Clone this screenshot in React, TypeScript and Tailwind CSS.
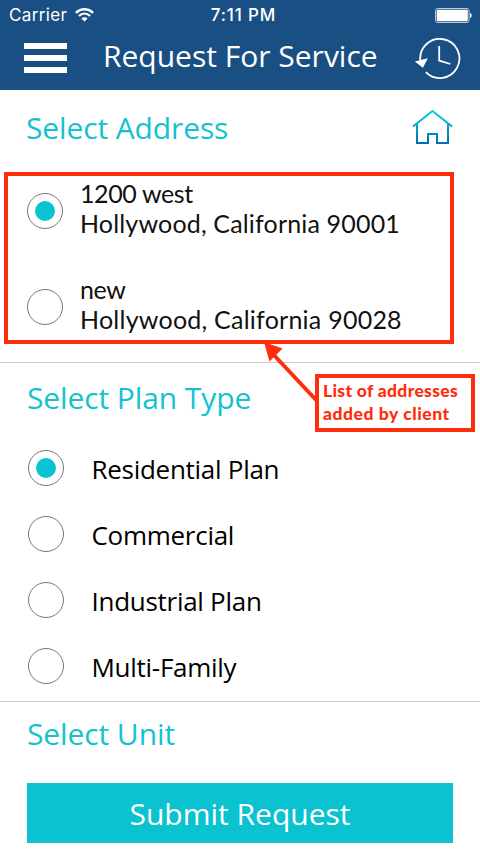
import React from "react";

const SANS = "font-['Open_Sans','Noto_Sans',sans-serif]";
const HUMANIST = "font-[Lato,'Noto_Sans',sans-serif]";

function Radio({ checked }: { checked?: boolean }) {
  return (
    <span className="flex size-9 shrink-0 items-center justify-center rounded-full border border-[#777] bg-white">
      {checked && <span className="size-5 rounded-full bg-[#0bc2d2]" />}
    </span>
  );
}

function Wifi() {
  return (
    <svg className="ml-2 h-[14px] w-[19px]" viewBox="0 0 19 14" fill="none" stroke="white" strokeWidth="2.3">
      <path d="M0.9 4.9 C5.8 0 13.2 0 18.1 4.9" />
      <path d="M3.9 8 C7.2 4.9 11.8 4.9 15.1 8" />
      <path d="M9.5 13.6 L6.4 10.4 C8.2 8.9 10.8 8.9 12.6 10.4 Z" fill="white" stroke="none" />
    </svg>
  );
}

function Battery() {
  return (
    <svg className="h-[15px] w-[37px]" viewBox="0 0 37 15">
      <rect x="0.5" y="0.5" width="33.5" height="14" rx="2" fill="none" stroke="#b9cbdc" />
      <rect x="1.7" y="1.7" width="31.1" height="11.6" rx="1" fill="white" />
      <path d="M35 5 C37.2 5.6 37.2 9.4 35 10 Z" fill="white" />
    </svg>
  );
}

function History() {
  return (
    <svg className="h-[42px] w-[48px]" viewBox="0 0 48 42" fill="none" stroke="white" strokeWidth="1.8">
      <path d="M6.3 22.5 A19.6 19.6 0 1 1 11.8 34.2" />
      <path d="M25.2 8 V22.5 L36.4 26" />
      <path d="M0.8 23.6 L13.8 20.2 L9 29.8 Z" fill="white" stroke="none" />
    </svg>
  );
}

function Home() {
  return (
    <svg className="h-[36px] w-[41px]" viewBox="0 0 41 36" fill="none" stroke="url(#home)" strokeWidth="2">
      <defs>
        <linearGradient id="home" x1="0" y1="0" x2="0" y2="36" gradientUnits="userSpaceOnUse">
          <stop offset="0" stopColor="#00d9e4" />
          <stop offset="1" stopColor="#0069b4" />
        </linearGradient>
      </defs>
      <path d="M1 17.5 L20.5 2 L40 17.5" />
      <path d="M5 15 V34 H16 V25 H25 V34 H36 V15" />
    </svg>
  );
}

const addresses = [
  { name: "1200 west", line: "Hollywood, California 90001", checked: true, spacing: "tracking-[0.17px]" },
  { name: "new", line: "Hollywood, California 90028", checked: false, spacing: "tracking-[0.24px]" },
];

const plans = ["Residential Plan", "Commercial", "Industrial Plan", "Multi-Family"];

export default function App() {
  return (
    <div className={`relative flex h-[852px] w-[480px] flex-col overflow-hidden bg-white ${SANS}`}>
      <header className="h-[90px] bg-[#1a4f84] text-white">
        <div className="grid h-[30px] grid-cols-3 items-center pr-2 pl-[9px] font-[Inter,sans-serif] text-[17px] leading-[30px]">
          <div className="flex items-center">
            <span className="pt-px leading-[29px] tracking-[0.35px]">Carrier</span>
            <Wifi />
          </div>
          <span className="pt-px pl-[6px] text-center leading-[29px] font-medium tracking-[0.85px] whitespace-nowrap">7:11 PM</span>
          <span className="flex justify-end"><Battery /></span>
        </div>
        <div className="flex h-[60px] items-start pl-6">
          <div className="mt-[13px] flex w-[43px] flex-col gap-1.5">
            <span className="h-1.5 bg-white" />
            <span className="h-1.5 bg-white" />
            <span className="h-1.5 bg-white" />
          </div>
          <h1 className="mt-1.5 ml-9 w-[300px] text-[30px] leading-10 whitespace-nowrap">Request For Service</h1>
          <span className="mt-2 ml-[11px]"><History /></span>
        </div>
      </header>

      <section className="h-[273px] border-b border-[#ccc] pt-[18px]">
        <div className="flex h-10 items-start justify-between pr-[27px] pl-[26px]">
          <h2 className="text-[30px] leading-10 tracking-[-0.12px] text-[#14c2cf]">Select Address</h2>
          <span className="mt-px"><Home /></span>
        </div>
        <div className="mt-6 ml-1 flex h-[172px] w-[450px] flex-col gap-9 border-4 border-[#ff2d0b] pl-[19px]">
          {addresses.map((a) => (
            <div key={a.line} className="flex h-[60px] items-center gap-[17px] pt-[10px]">
              <Radio checked={a.checked} />
              <p className={`-mt-[7px] text-[25px] leading-[30px] whitespace-nowrap text-[#111] ${HUMANIST} ${a.spacing}`}>
                <span className="tracking-[-0.4px]">{a.name}</span>
                <br />
                {a.line}
              </p>
            </div>
          ))}
        </div>
      </section>

      <section className="h-[339px] border-b border-[#ccc] pt-[15px]">
        <h2 className="pl-[27px] text-[30px] leading-10 tracking-[-0.1px] text-[#14c2cf]">Select Plan Type</h2>
        <div className="mt-8 flex flex-col gap-[30px] pl-7">
          {plans.map((p, i) => (
            <div key={p} className="flex h-9 items-center gap-[27.5px]">
              <Radio checked={i === 0} />
              <span className="pt-0.5 text-[26px] leading-9 tracking-[-0.28px] whitespace-nowrap text-black">{p}</span>
            </div>
          ))}
        </div>
      </section>

      <section className="px-[27px] pt-3">
        <h2 className="text-[30px] leading-10 tracking-[-0.1px] text-[#14c2cf]">Select Unit</h2>
        <button className="mt-[29px] block h-[60px] w-full bg-[#0ac2d0] pt-px text-[30px] leading-[60px] text-white">
          Submit Request
        </button>
      </section>

      <svg className="absolute top-[340px] left-[260px] h-[64px] w-[60px]" viewBox="0 0 60 64">
        <path d="M12 13 L57 61" stroke="#ff2d0b" strokeWidth="4" />
        <path d="M4 2 L22.5 8.5 L9.5 21.5 Z" fill="#ff2d0b" />
      </svg>
      <div className={`absolute top-[374px] left-[315px] h-[58px] w-[160px] border-4 border-[#ff2d0b] bg-white pt-px pl-1 text-[17.5px] leading-[23px] font-black tracking-[0.32px] whitespace-nowrap text-[#ff2d0b] ${HUMANIST}`}>
        List of addresses
        <br />
        <span className="tracking-[0.55px]">added by client</span>
      </div>
    </div>
  );
}
